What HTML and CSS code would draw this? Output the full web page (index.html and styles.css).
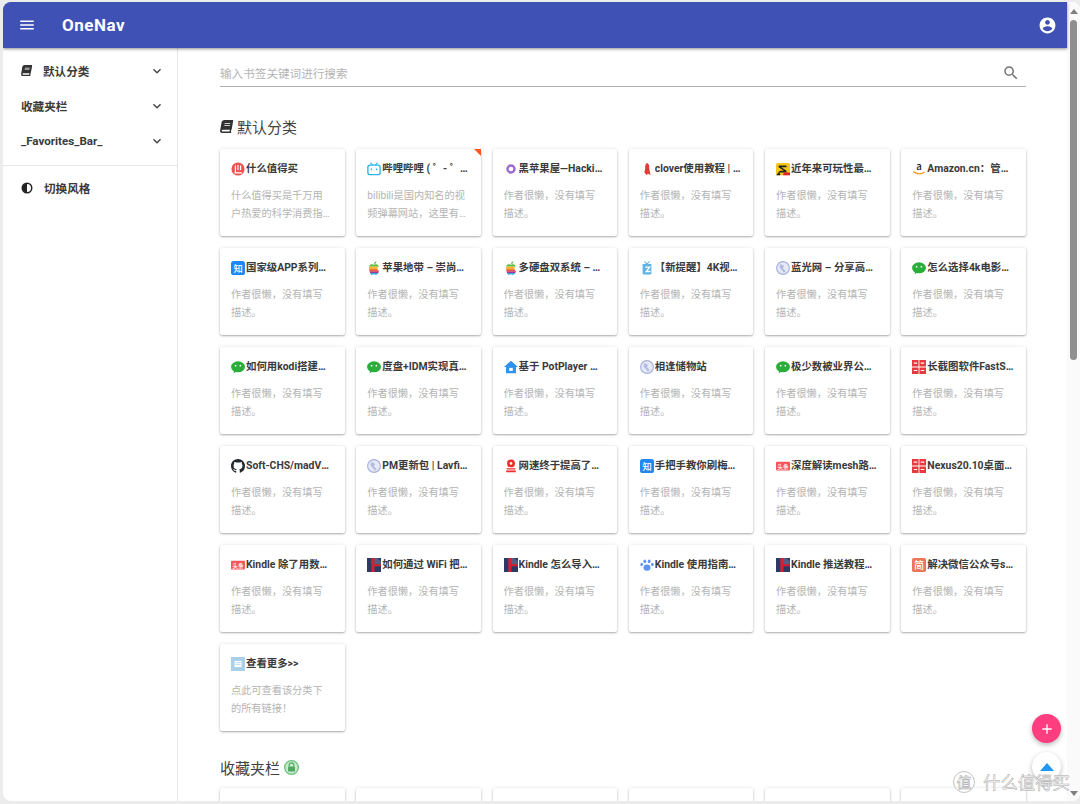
FILE: index.html
```html
<!DOCTYPE html>
<html lang="en">
<head>
  <meta charset="UTF-8" />
  <meta name="viewport" content="width=device-width, initial-scale=1.0"/>
  <title>OneNav</title>
  <link rel="stylesheet" href="styles.css">
</head>
<body>
  <!-- favicons, reused by the cards -->
  <svg class="defs" aria-hidden="true">
    <defs>
      <clipPath id="apple-shape"><path d="M8 4.300C6.500 3.500 4 3.300 2.800 5.500 1.500 8 3.200 15.700 5.500 15.700c1 0 1.500-.5 2.500-.5s1.500.5 2.500.5c1.500 0 2.900-2.700 3.300-4-2.300-1.200-2.500-4.500-.3-5.800C12.300 3.500 9.500 3.500 8 4.300z"/></clipPath>
    </defs>
    <symbol id="i-book" viewBox="0 0 448 512"><path d="M448 360V24c0-13.3-10.7-24-24-24H96C43 0 0 43 0 96v320c0 53 43 96 96 96h328c13.3 0 24-10.7 24-24v-16c0-7.5-3.5-14.3-8.9-18.7-4.2-15.4-4.2-59.3 0-74.7 5.4-4.3 8.9-11.1 8.9-18.6zM128 134c0-3.3 2.7-6 6-6h212c3.3 0 6 2.7 6 6v20c0 3.3-2.7 6-6 6H134c-3.3 0-6-2.7-6-6v-20zm0 64c0-3.3 2.7-6 6-6h212c3.3 0 6 2.7 6 6v20c0 3.3-2.7 6-6 6H134c-3.3 0-6-2.7-6-6v-20zm253.4 250H96c-17.7 0-32-14.3-32-32 0-17.6 14.4-32 32-32h285.4c-1.9 17.1-1.9 46.9 0 64z"/></symbol>
    <symbol id="i-chevron" viewBox="0 0 24 24"><path d="M16.59 8.59 12 13.17 7.41 8.59 6 10l6 6 6-6z"/></symbol>
    <symbol id="f-smzdm" viewBox="0 0 16 16"><circle cx="8" cy="8" r="7.5" fill="#ef5350"/><path d="M5 4v8M8 3.5v6M11 4v5M4 12.5h8.5" stroke="#fff" stroke-width="1.3" fill="none"/></symbol>
    <symbol id="f-bili" viewBox="0 0 16 16"><path d="M4 1l2.5 2.5M12 1L9.5 3.5" stroke="#29b6e8" stroke-width="1.4"/><rect x="1" y="3.5" width="14" height="11" rx="2.5" fill="#fff" stroke="#29b6e8" stroke-width="1.5"/><path d="M5 7.5v2M11 7.5v2" stroke="#29b6e8" stroke-width="1.5"/></symbol>
    <symbol id="f-ring" viewBox="0 0 16 16"><circle cx="8" cy="8" r="4" fill="#fff" stroke="#9c6cd0" stroke-width="2.800"/></symbol>
    <symbol id="f-clover" viewBox="0 0 16 16"><path d="M8 1c2 1 3 3 2.500 6L12 15l-3-2-1 2-3-3 1-5C5.500 4 6.500 2 8 1z" fill="#e53935"/></symbol>
    <symbol id="f-s" viewBox="0 0 16 16"><rect y="1" width="16" height="14" rx="2" fill="#f5c518"/><path d="M3 4h9v2H6l6 4v2H2l3-2h4L3 6z" fill="#222"/><path d="M9 12h7v3H8z" fill="#e52020"/><path d="M0 15l4-4 1 4z" fill="#222"/></symbol>
    <symbol id="f-amazon" viewBox="0 0 16 16"><text x="8" y="9.500" text-anchor="middle" class="fav-text" font-size="11" fill="#222">a</text><path d="M1.500 11c4 3 9 3 13 .5" stroke="#f79c1d" stroke-width="1.500" fill="none"/></symbol>
    <symbol id="f-zhihu" viewBox="0 0 16 16"><rect width="16" height="16" rx="3" fill="#1e88f5"/><text x="8" y="12" text-anchor="middle" class="fav-text" font-size="10.500" fill="#fff">知</text></symbol>
    <symbol id="f-apple" viewBox="0 0 16 16"><g clip-path="url(#apple-shape)"><rect y="3" width="16" height="3.500" fill="#61bb46"/><rect y="6.500" width="16" height="2" fill="#fdb827"/><rect y="8.500" width="16" height="2" fill="#f5821f"/><rect y="10.500" width="16" height="1.800" fill="#e03a3e"/><rect y="12.300" width="16" height="1.700" fill="#963d97"/><rect y="14" width="16" height="2" fill="#009ddc"/></g><path d="M8 3.500C8 2 9 .7 10.800.3 10.800 2 9.800 3.300 8 3.500z" fill="#61bb46"/></symbol>
    <symbol id="f-cup" viewBox="0 0 16 16"><path d="M3 3.500h10V14a1.500 1.500 0 0 1-1.500 1.500h-7A1.500 1.500 0 0 1 3 14z" fill="#5bb3e6"/><path d="M5 .500l3 3 3-3" stroke="#5bb3e6" stroke-width="1.200" fill="none"/><path d="M6 7h5L7 12h5" stroke="#fff" stroke-width="1.500" fill="none"/></symbol>
    <symbol id="f-globe" viewBox="0 0 16 16"><circle cx="8" cy="8" r="7.300" fill="#e6e9f6" stroke="#a8b2dc" stroke-width="1.300"/><path d="M5 3.500l4 2-1 3 3 3-2 2-3-4-2-2z" fill="#b2bbe2"/></symbol>
    <symbol id="f-wechat" viewBox="0 0 16 16"><ellipse cx="8" cy="7.800" rx="8" ry="6.300" fill="#2aae3a"/><path d="M3.500 12l-.5 3 3.500-2z" fill="#2aae3a"/><circle cx="5.300" cy="6.500" r="1" fill="#fff"/><circle cx="10.700" cy="6.500" r="1" fill="#fff"/></symbol>
    <symbol id="f-house" viewBox="0 0 16 16"><path d="M8 .800l8 7.200h-2.300v7H2.300V8H0z" fill="#2f93ee"/><path d="M6 9h4v3.500H6z" fill="#fff"/></symbol>
    <symbol id="f-github" viewBox="0 0 16 16"><path fill="#24292e" d="M8 0C3.580 0 0 3.580 0 8c0 3.540 2.290 6.530 5.470 7.590.4.070.55-.17.55-.38 0-.19-.01-.82-.01-1.490-2.010.37-2.530-.49-2.690-.94-.09-.23-.48-.94-.82-1.130-.28-.15-.68-.52-.01-.53.63-.01 1.080.58 1.230.82.720 1.210 1.870.87 2.330.66.070-.52.280-.87.510-1.070-1.780-.2-3.640-.89-3.640-3.950 0-.87.310-1.590.820-2.150-.08-.2-.36-1.020.08-2.120 0 0 .67-.21 2.200.82.640-.18 1.320-.27 2-.27.680 0 1.360.09 2 .27 1.530-1.040 2.200-.82 2.200-.82.440 1.100.160 1.920.08 2.120.510.560.820 1.270.820 2.150 0 3.070-1.870 3.750-3.650 3.950.290.25.540.730.540 1.480 0 1.070-.01 1.930-.01 2.200 0 .21.150.46.550.38A8.013 8.013 0 0 0 16 8c0-4.420-3.580-8-8-8z"/></symbol>
    <symbol id="f-redmark" viewBox="0 0 16 16"><circle cx="8" cy="5" r="4.500" fill="#f02c2c"/><circle cx="8" cy="5" r="1.500" fill="#fff"/><path d="M3 10.500h10v1.500H3zM2.500 13h11v2h-11z" fill="#f02c2c"/></symbol>
    <symbol id="f-grid" viewBox="0 0 16 16"><rect width="16" height="16" fill="#e9383f"/><path d="M7.500 0v16h1V0zM0 7.500v1h16v-1z" fill="#fff"/><path d="M2 3.500h4M10 3.500h4M2 12h4M10 12h4" stroke="#fff" stroke-width="1.300"/></symbol>
    <symbol id="f-toutiao" viewBox="0 0 16 16"><rect y="3" width="16" height="10" rx="1" fill="#f5565c"/><text x="8" y="11" text-anchor="middle" class="fav-text" font-size="6.500" fill="#fff">头条</text></symbol>
    <symbol id="f-navy" viewBox="0 0 16 16"><rect width="16" height="16" fill="#2c3a66"/><path d="M5 0h7l4 4v3H5z" fill="#fff" opacity=".18"/><path d="M5 7h11v2.500H8.500V16H5z" fill="#d6202f"/><path d="M5 0h3.500v7H5z" fill="#d6202f"/></symbol>
    <symbol id="f-paw" viewBox="0 0 16 16"><g fill="#5a96f5"><ellipse cx="8" cy="11" rx="4" ry="3.500"/><ellipse cx="5.500" cy="3.800" rx="1.600" ry="2.200"/><ellipse cx="10.500" cy="3.800" rx="1.600" ry="2.200"/><ellipse cx="1.900" cy="7.500" rx="1.500" ry="2"/><ellipse cx="14.100" cy="7.500" rx="1.500" ry="2"/></g></symbol>
    <symbol id="f-jian" viewBox="0 0 16 16"><rect width="16" height="16" rx="2" fill="#ee7658"/><text x="8" y="12.500" text-anchor="middle" class="fav-text" font-size="11.500" fill="#fff">简</text></symbol>
    <symbol id="f-more" viewBox="0 0 16 16"><rect width="16" height="16" fill="#aacfe9"/><rect x="4" y="4.500" width="8" height="7" fill="#fff"/><path d="M5 6.500h6M5 8.500h6" stroke="#aacfe9" stroke-width=".8"/></symbol>
  </svg>

  <div class="window">
    <div class="page">
      <header class="topbar">
        <svg class="menu-icon" viewBox="0 0 24 24"><path d="M3 18h18v-2H3v2zm0-5h18v-2H3v2zm0-7v2h18V6H3z"/></svg>
        <span class="brand">OneNav</span>
        <svg class="user-icon" viewBox="0 0 24 24"><path d="M12 2C6.480 2 2 6.480 2 12s4.480 10 10 10 10-4.480 10-10S17.520 2 12 2zm0 3c1.660 0 3 1.340 3 3s-1.340 3-3 3-3-1.340-3-3 1.340-3 3-3zm0 14.200c-2.500 0-4.710-1.280-6-3.220.030-1.990 4-3.080 6-3.080 1.990 0 5.970 1.090 6 3.080-1.290 1.940-3.500 3.220-6 3.220z"/></svg>
      </header>

      <div class="content">
        <aside class="sidebar">
          <div class="nav-item">
            <svg class="nav-book"><use href="#i-book"/></svg>
            <span class="nav-label indent">默认分类</span>
            <svg class="chevron"><use href="#i-chevron"/></svg>
          </div>
          <div class="nav-item">
            <span class="nav-label">收藏夹栏</span>
            <svg class="chevron"><use href="#i-chevron"/></svg>
          </div>
          <div class="nav-item">
            <span class="nav-label">_Favorites_Bar_</span>
            <svg class="chevron"><use href="#i-chevron"/></svg>
          </div>
          <div class="nav-divider"></div>
          <div class="nav-item">
            <svg class="nav-half" viewBox="0 0 24 24"><circle cx="12" cy="12" r="9.500" fill="none" stroke="#222" stroke-width="3"/><path d="M12 3a9 9 0 0 0 0 18z" fill="#222"/></svg>
            <span class="nav-label indent">切换风格</span>
          </div>
        </aside>

        <main class="main">
          <div class="search">
            <span class="search-hint">输入书签关键词进行搜索</span>
            <svg class="search-icon" viewBox="0 0 24 24"><path d="M15.500 14h-.79l-.28-.27A6.471 6.471 0 0 0 16 9.500 6.500 6.500 0 1 0 9.500 16c1.610 0 3.090-.59 4.230-1.570l.27.28v.79l5 4.990L20.490 19l-4.990-5zm-6 0C7.010 14 5 11.990 5 9.500S7.010 5 9.500 5 14 7.010 14 9.500 11.990 14 9.500 14z"/></svg>
          </div>

          <section class="section">
            <h2 class="section-title"><svg class="title-book"><use href="#i-book"/></svg>默认分类</h2>
            <div class="cards">
              <a class="card"><div class="card-head"><svg class="fav"><use href="#f-smzdm"/></svg><span class="card-title">什么值得买</span></div><p class="card-desc">什么值得买是千万用户热爱的科学消费指南和网购攻略平台，值得信赖</p></a>
              <a class="card"><span class="ribbon"></span><div class="card-head"><svg class="fav"><use href="#f-bili"/></svg><span class="card-title">哔哩哔哩 ( ゜- ゜)つロ 干杯~-bilibili</span></div><p class="card-desc">bilibili是国内知名的视频弹幕网站，这里有及时的动漫新番和活跃的社区</p></a>
              <a class="card"><div class="card-head"><svg class="fav"><use href="#f-ring"/></svg><span class="card-title">黑苹果屋—Hackintosh</span></div><p class="card-desc">作者很懒，没有填写描述。</p></a>
              <a class="card"><div class="card-head"><svg class="fav"><use href="#f-clover"/></svg><span class="card-title">clover使用教程 | 黑苹果屋</span></div><p class="card-desc">作者很懒，没有填写描述。</p></a>
              <a class="card"><div class="card-head"><svg class="fav"><use href="#f-s"/></svg><span class="card-title">近年来可玩性最高的游戏</span></div><p class="card-desc">作者很懒，没有填写描述。</p></a>
              <a class="card"><div class="card-head"><svg class="fav"><use href="#f-amazon"/></svg><span class="card-title">Amazon.cn：管理我的内容和设备</span></div><p class="card-desc">作者很懒，没有填写描述。</p></a>

              <a class="card"><div class="card-head"><svg class="fav"><use href="#f-zhihu"/></svg><span class="card-title">国家级APP系列之一二三</span></div><p class="card-desc">作者很懒，没有填写描述。</p></a>
              <a class="card"><div class="card-head"><svg class="fav"><use href="#f-apple"/></svg><span class="card-title">苹果地带 – 崇尚苹果的生活</span></div><p class="card-desc">作者很懒，没有填写描述。</p></a>
              <a class="card"><div class="card-head"><svg class="fav"><use href="#f-apple"/></svg><span class="card-title">多硬盘双系统 – 苹果地带</span></div><p class="card-desc">作者很懒，没有填写描述。</p></a>
              <a class="card"><div class="card-head"><svg class="fav"><use href="#f-cup"/></svg><span class="card-title">【新提醒】4K视频资源下载</span></div><p class="card-desc">作者很懒，没有填写描述。</p></a>
              <a class="card"><div class="card-head"><svg class="fav"><use href="#f-globe"/></svg><span class="card-title">蓝光网 – 分享高清影视资源</span></div><p class="card-desc">作者很懒，没有填写描述。</p></a>
              <a class="card"><div class="card-head"><svg class="fav"><use href="#f-wechat"/></svg><span class="card-title">怎么选择4k电影资源下载</span></div><p class="card-desc">作者很懒，没有填写描述。</p></a>

              <a class="card"><div class="card-head"><svg class="fav"><use href="#f-wechat"/></svg><span class="card-title">如何用kodi搭建家庭影院</span></div><p class="card-desc">作者很懒，没有填写描述。</p></a>
              <a class="card"><div class="card-head"><svg class="fav"><use href="#f-wechat"/></svg><span class="card-title">度盘+IDM实现真正的高速下载</span></div><p class="card-desc">作者很懒，没有填写描述。</p></a>
              <a class="card"><div class="card-head"><svg class="fav"><use href="#f-house"/></svg><span class="card-title">基于 PotPlayer 的播放设置方案</span></div><p class="card-desc">作者很懒，没有填写描述。</p></a>
              <a class="card"><div class="card-head"><svg class="fav"><use href="#f-globe"/></svg><span class="card-title">相逢储物站</span></div><p class="card-desc">作者很懒，没有填写描述。</p></a>
              <a class="card"><div class="card-head"><svg class="fav"><use href="#f-wechat"/></svg><span class="card-title">极少数被业界公认的好软件</span></div><p class="card-desc">作者很懒，没有填写描述。</p></a>
              <a class="card"><div class="card-head"><svg class="fav"><use href="#f-grid"/></svg><span class="card-title">长截图软件FastStone Capture</span></div><p class="card-desc">作者很懒，没有填写描述。</p></a>

              <a class="card"><div class="card-head"><svg class="fav"><use href="#f-github"/></svg><span class="card-title">Soft-CHS/madVR-Chinese</span></div><p class="card-desc">作者很懒，没有填写描述。</p></a>
              <a class="card"><div class="card-head"><svg class="fav"><use href="#f-globe"/></svg><span class="card-title">PM更新包 | Lavfilters 解码器</span></div><p class="card-desc">作者很懒，没有填写描述。</p></a>
              <a class="card"><div class="card-head"><svg class="fav"><use href="#f-redmark"/></svg><span class="card-title">网速终于提高了不少的方法</span></div><p class="card-desc">作者很懒，没有填写描述。</p></a>
              <a class="card"><div class="card-head"><svg class="fav"><use href="#f-zhihu"/></svg><span class="card-title">手把手教你刷梅林固件的教程</span></div><p class="card-desc">作者很懒，没有填写描述。</p></a>
              <a class="card"><div class="card-head"><svg class="fav"><use href="#f-toutiao"/></svg><span class="card-title">深度解读mesh路由器的组网</span></div><p class="card-desc">作者很懒，没有填写描述。</p></a>
              <a class="card"><div class="card-head"><svg class="fav"><use href="#f-grid"/></svg><span class="card-title">Nexus20.10桌面版的安装教程</span></div><p class="card-desc">作者很懒，没有填写描述。</p></a>

              <a class="card"><div class="card-head"><svg class="fav"><use href="#f-toutiao"/></svg><span class="card-title">Kindle 除了用数据线传书以外</span></div><p class="card-desc">作者很懒，没有填写描述。</p></a>
              <a class="card"><div class="card-head"><svg class="fav"><use href="#f-navy"/></svg><span class="card-title">如何通过 WiFi 把电子书传到设备</span></div><p class="card-desc">作者很懒，没有填写描述。</p></a>
              <a class="card"><div class="card-head"><svg class="fav"><use href="#f-navy"/></svg><span class="card-title">Kindle 怎么导入电子书的方法</span></div><p class="card-desc">作者很懒，没有填写描述。</p></a>
              <a class="card"><div class="card-head"><svg class="fav"><use href="#f-paw"/></svg><span class="card-title">Kindle 使用指南和常见问题</span></div><p class="card-desc">作者很懒，没有填写描述。</p></a>
              <a class="card"><div class="card-head"><svg class="fav"><use href="#f-navy"/></svg><span class="card-title">Kindle 推送教程和常见问题</span></div><p class="card-desc">作者很懒，没有填写描述。</p></a>
              <a class="card"><div class="card-head"><svg class="fav"><use href="#f-jian"/></svg><span class="card-title">解决微信公众号sendkey问题</span></div><p class="card-desc">作者很懒，没有填写描述。</p></a>

              <a class="card"><div class="card-head"><svg class="fav"><use href="#f-more"/></svg><span class="card-title">查看更多&gt;&gt;</span></div><p class="card-desc">点此可查看该分类下的所有链接！</p></a>
            </div>
          </section>

          <section class="section section-next">
            <h2 class="section-title">收藏夹栏<svg class="lock" viewBox="0 0 16 16"><circle cx="8" cy="8" r="7.300" fill="#c9e8cf" stroke="#6cbf7b" stroke-width="1.400"/><path d="M5.500 7V5.500a2.500 2.500 0 0 1 5 0V7" fill="none" stroke="#4ea860" stroke-width="1.200"/><rect x="4.300" y="7" width="7.400" height="5.300" rx=".8" fill="#4ea860"/></svg></h2>
            <div class="cards">
              <a class="card"></a><a class="card"></a><a class="card"></a>
              <a class="card"></a><a class="card"></a><a class="card"></a>
            </div>
          </section>
        </main>
      </div>
    </div>

    <div class="scrollbar">
      <span class="arrow-up"></span>
      <span class="thumb"></span>
      <span class="arrow-down"></span>
    </div>

    <button class="fab fab-add"><svg viewBox="0 0 24 24"><path d="M19 13h-6v6h-2v-6H5v-2h6V5h2v6h6v2z"/></svg></button>
    <button class="fab fab-top"><span class="top-arrow"></span></button>

    <div class="watermark"><span class="mark-circle">值</span><span class="mark-text">什么值得买</span></div>
  </div>
</body>
</html>
```

FILE: styles.css
```css
* {
  box-sizing: border-box;
}
html, body {
  margin: 0;
  height: 804px;
  overflow: hidden;
}
body {
  background: #ececec;
  padding: 2px 0 3px 3px;
  font-family: Roboto, "Noto Sans CJK SC", sans-serif;
  color: #212121;
}
.defs {
  position: absolute;
  width: 0;
  height: 0;
}
.fav-text {
  font-family: "Noto Sans CJK SC", sans-serif;
  font-weight: 500;
}

.window {
  position: relative;
  display: flex;
  height: 799px;
  background: #fff;
  border-radius: 8px;
  overflow: hidden;
}
.page {
  flex: 1;
  min-width: 0;
  display: flex;
  flex-direction: column;
}

/* top bar */
.topbar {
  position: relative;
  z-index: 2;
  flex: none;
  display: flex;
  align-items: center;
  height: 46px;
  padding: 0 10px 0 15px;
  background: #3f51b5;
  color: #fff;
  box-shadow: 0 1px 3px rgba(0, 0, 0, .45);
}
.menu-icon {
  width: 18px;
  height: 18px;
  fill: #fff;
}
.brand {
  margin-left: 26px;
  font-size: 17px;
  font-weight: 700;
  letter-spacing: .5px;
}
.user-icon {
  width: 19px;
  height: 19px;
  margin-left: auto;
  fill: #fff;
}

.content {
  flex: 1;
  min-height: 0;
  display: flex;
}

/* left nav */
.sidebar {
  flex: none;
  width: 175px;
  padding-top: 5px;
  border-right: 1px solid #e6e6e6;
}
.nav-item {
  display: flex;
  align-items: center;
  height: 35px;
  padding: 0 12px 0 18px;
}
.nav-book {
  flex: none;
  width: 11px;
  height: 11px;
  fill: #333;
  transform: skewX(-10deg);
}
.nav-half {
  flex: none;
  width: 12px;
  height: 12px;
}
.nav-label {
  font-size: 11.6px;
  font-weight: 700;
  color: #3a3a3a;
}
.nav-label.indent {
  margin-left: 11px;
}
.chevron {
  width: 16px;
  height: 16px;
  margin-left: auto;
  fill: #444;
}
.nav-divider {
  margin: 7px 0 4px;
  height: 1px;
  background: #e6e6e6;
}

/* main column */
.main {
  flex: 1;
  min-width: 0;
  padding: 0 41px 0 42px;
  overflow: hidden;
}
.search {
  display: flex;
  align-items: center;
  justify-content: space-between;
  height: 25px;
  margin-top: 14px;
  padding: 0 6px 2px 0;
  border-bottom: 1px solid #b0b0b0;
}
.search-hint {
  font-size: 11.6px;
  color: #b4b4b4;
}
.search-icon {
  width: 18px;
  height: 18px;
  fill: #757575;
}

.section {
  margin-top: 28px;
}
.section-next {
  margin-top: 25px;
}
.section-title {
  display: flex;
  align-items: center;
  height: 22px;
  margin: 0 0 12px;
  font-size: 15px;
  font-weight: 400;
  color: #424242;
}
.section-next .section-title {
  margin-bottom: 10px;
}
.title-book {
  width: 13px;
  height: 13px;
  margin-right: 4px;
  fill: #333;
  transform: skewX(-10deg);
}
.lock {
  width: 15px;
  height: 15px;
  margin-left: 4px;
}

.cards {
  display: grid;
  grid-template-columns: repeat(6, minmax(0, 1fr));
  gap: 12px 11.6px;
}
.card {
  position: relative;
  display: block;
  height: 87px;
  padding: 12px 13px 0 11px;
  background: #fff;
  border-radius: 2px;
  box-shadow: 0 1px 2px rgba(0, 0, 0, .3), 0 0 4px rgba(0, 0, 0, .08);
}
.ribbon {
  position: absolute;
  top: 0;
  right: 0;
  border-top: 7px solid #ff5722;
  border-left: 7px solid transparent;
}
.card-head {
  display: flex;
  align-items: center;
  height: 15px;
  margin-right: -2px;
}
.fav {
  flex: none;
  width: 14px;
  height: 14px;
  margin-right: 1px;
}
.card-title {
  flex: 1;
  min-width: 0;
  font-size: 10.4px;
  line-height: 15px;
  font-weight: 700;
  color: #3a3a3a;
  white-space: nowrap;
  overflow: hidden;
  text-overflow: ellipsis;
}
.card-desc {
  display: -webkit-box;
  -webkit-box-orient: vertical;
  -webkit-line-clamp: 2;
  margin: 11px 0 0;
  font-size: 10.2px;
  line-height: 17.5px;
  color: #b4b4b4;
  overflow: hidden;
}

/* scrollbar */
.scrollbar {
  flex: none;
  position: relative;
  width: 13px;
  display: flex;
  flex-direction: column;
  align-items: center;
  padding-top: 7px;
  background: #fafafa;
}
.arrow-up {
  border-bottom: 5px solid #7f7f7f;
  border-left: 4px solid transparent;
  border-right: 4px solid transparent;
}
.thumb {
  width: 7px;
  height: 340px;
  margin-top: 6px;
  border-radius: 4px;
  background: #8f8f8f;
}
.arrow-down {
  margin-top: auto;
  margin-bottom: 5px;
  border-top: 5px solid #7f7f7f;
  border-left: 4px solid transparent;
  border-right: 4px solid transparent;
}

/* floating buttons */
.fab {
  position: absolute;
  right: 19px;
  display: flex;
  align-items: center;
  justify-content: center;
  width: 29px;
  height: 29px;
  padding: 0;
  border: 0;
  border-radius: 50%;
  box-shadow: 0 2px 5px rgba(0, 0, 0, .28);
}
.fab-add {
  top: 712px;
  background: #ff3d7f;
}
.fab-add svg {
  width: 16px;
  height: 16px;
  fill: #fff;
}
.fab-top {
  top: 750px;
  background: #fff;
}
.top-arrow {
  border-bottom: 8px solid #2196f3;
  border-left: 7px solid transparent;
  border-right: 7px solid transparent;
}

/* site watermark over the corner */
.watermark {
  position: absolute;
  left: 950px;
  top: 769px;
  display: flex;
  align-items: center;
  gap: 8px;
  font-family: "Noto Sans CJK SC", sans-serif;
  color: rgba(255, 255, 255, .9);
  -webkit-text-stroke: .5px #a8a8a8;
}
.mark-circle {
  width: 22px;
  height: 22px;
  border: 1px solid #c4c4c4;
  border-radius: 50%;
  font-size: 15px;
  line-height: 19px;
  text-align: center;
}
.mark-text {
  font-size: 17.4px;
  line-height: 22px;
}
```
